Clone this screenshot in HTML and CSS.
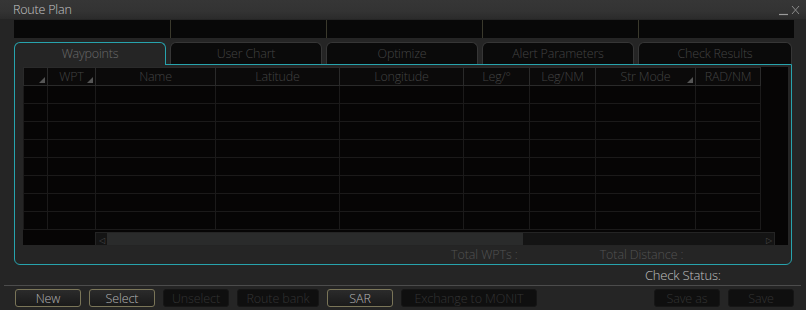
FILE: index.html
```html
<!DOCTYPE html>
<html lang="en">
<head>
    <meta charset="UTF-8">
    <title>Route Plan</title>
    <link rel="stylesheet" href="styles.css">
</head>
<body>
<div class="window">
    <div class="titlebar">
        <span class="title">Route Plan</span>
        <span class="ctrls">
            <svg width="24" height="12" viewBox="0 0 24 12">
                <line x1="1" y1="10.5" x2="10" y2="10.5" stroke="#9a9a9a" stroke-width="1.2"/>
                <line x1="14" y1="2" x2="21" y2="10" stroke="#8a8a8a" stroke-width="1"/>
                <line x1="21" y1="2" x2="14" y2="10" stroke="#8a8a8a" stroke-width="1"/>
            </svg>
        </span>
    </div>

    <div class="strip">
        <div></div><div></div><div></div><div></div><div></div>
    </div>

    <div class="tabs">
        <div class="tab active">Waypoints</div>
        <div class="tab">User Chart</div>
        <div class="tab">Optimize</div>
        <div class="tab">Alert Parameters</div>
        <div class="tab last">Check Results</div>
    </div>

    <div class="panel">
        <div class="grid">
            <table class="wp">
                <colgroup>
                    <col style="width:24px"><col style="width:48px"><col style="width:120px">
                    <col style="width:124px"><col style="width:124px"><col style="width:66px">
                    <col style="width:66px"><col style="width:100px"><col style="width:65px">
                </colgroup>
                <tr>
                    <th class="sort"></th>
                    <th class="sort">WPT</th>
                    <th>Name</th>
                    <th>Latitude</th>
                    <th>Longitude</th>
                    <th>Leg/°</th>
                    <th>Leg/NM</th>
                    <th class="sort">Str Mode</th>
                    <th>RAD/NM</th>
                </tr>
                <tr><td></td><td></td><td></td><td></td><td></td><td></td><td></td><td></td><td></td></tr>
                <tr><td></td><td></td><td></td><td></td><td></td><td></td><td></td><td></td><td></td></tr>
                <tr><td></td><td></td><td></td><td></td><td></td><td></td><td></td><td></td><td></td></tr>
                <tr><td></td><td></td><td></td><td></td><td></td><td></td><td></td><td></td><td></td></tr>
                <tr><td></td><td></td><td></td><td></td><td></td><td></td><td></td><td></td><td></td></tr>
                <tr><td></td><td></td><td></td><td></td><td></td><td></td><td></td><td></td><td></td></tr>
                <tr><td></td><td></td><td></td><td></td><td></td><td></td><td></td><td></td><td></td></tr>
                <tr><td></td><td></td><td></td><td></td><td></td><td></td><td></td><td></td><td></td></tr>
            </table>
            <div class="hscroll">
                <div class="frozen"></div>
                <div class="track">
                    <span class="arrow left">◁</span>
                    <span class="thumb"></span>
                    <span class="arrow right">▷</span>
                </div>
            </div>
        </div>
        <div class="totals">
            <span class="total-wpts">Total WPTs :</span>
            <span class="total-dist">Total Distance :</span>
        </div>
    </div>

    <div class="status">Check Status:</div>

    <div class="buttons">
        <button class="btn">New</button>
        <button class="btn">Select</button>
        <button class="btn off">Unselect</button>
        <button class="btn off wide">Route bank</button>
        <button class="btn">SAR</button>
        <button class="btn off xwide">Exchange to MONIT</button>
        <span class="spacer"></span>
        <button class="btn off">Save as</button>
        <button class="btn off">Save</button>
    </div>
</div>
</body>
</html>
```

FILE: styles.css
```css
body {
    margin: 0;
    background: #232323;
    font-family: "Open Sans", "Noto Sans", sans-serif;
    font-size: 12px;
    font-weight: 300;
}

.window {
    width: 806px;
    height: 310px;
    overflow: hidden;
    background: #252525;
    display: flex;
    flex-direction: column;
}

.titlebar {
    height: 19px;
    background: linear-gradient(#363636, #333333 60%, #2b2b2b);
    display: flex;
    align-items: center;
    justify-content: space-between;
    padding: 0 4px 0 13px;
}

.title {
    color: #c4c4c4;
    font-size: 12.5px;
    letter-spacing: -0.2px;
}

.ctrls svg {
    display: block;
}

.strip {
    margin: 1px 0 0 14px;
    width: 780px;
    height: 18px;
    background: #080808;
    display: grid;
    grid-template-columns: repeat(5, 1fr);
}

.strip div + div {
    border-left: 1px solid #3a392c;
}

.tabs {
    margin: 4px 0 0 14px;
    width: 778px;
    height: 22px;
    display: flex;
    gap: 4px;
}

.tab {
    width: 150px;
    background: #0a0a0a;
    border: 1px solid #363636;
    border-bottom: none;
    border-radius: 6px 6px 0 0;
    color: #434343;
    text-align: center;
    line-height: 22px;
    font-size: 12.5px;
    letter-spacing: -0.2px;
}

.tab.last {
    flex: 1;
}

.tab.active {
    background: #252525;
    border-color: #27a3ad;
    color: #6a6a6a;
    height: 22px;
    position: relative;
    z-index: 1;
}

.panel {
    margin-left: 14px;
    width: 776px;
    height: 199px;
    border: 1px solid #27a3ad;
    border-radius: 0 0 6px 6px;
    padding: 0;
}

.grid {
    margin: 2px 0 0 8px;
    width: 765px;
    height: 178px;
    background: #060505;
}

.wp {
    table-layout: fixed;
    border-collapse: collapse;
    width: 737px;
}

.wp tr {
    height: 18px;
}

.wp th {
    background: #0b0a0a;
    border: 1px solid #2a2a2a;
    color: #424242;
    font-weight: 300;
    font-size: 12.5px;
    padding: 0;
    height: 17px;
    letter-spacing: -0.2px;
    position: relative;
}

.wp th.sort::after {
    content: "";
    position: absolute;
    right: 2px;
    bottom: 2px;
    border-style: solid;
    border-width: 0 0 6px 6px;
    border-color: transparent transparent #555 transparent;
}

.wp td {
    border: 1px solid #1b1a1a;
    padding: 0;
}

.hscroll {
    margin-top: 2px;
    height: 14px;
    display: flex;
}

.frozen {
    width: 72px;
}

.track {
    width: 678px;
    background: #141414;
    border: 1px solid #242424;
    display: flex;
    align-items: center;
}

.arrow {
    color: #4a4a4a;
    font-size: 8px;
    width: 11px;
    text-align: center;
}

.arrow.right {
    margin-left: auto;
}

.thumb {
    width: 416px;
    height: 12px;
    background: #2a2b2b;
}

.totals {
    height: 19px;
    display: flex;
    align-items: center;
    color: #525252;
    font-size: 12.5px;
    letter-spacing: -0.1px;
}

.total-wpts {
    margin-left: 436px;
}

.total-dist {
    margin-left: 82px;
}

.status {
    height: 20px;
    line-height: 21px;
    color: #c0c0c0;
    font-size: 13px;
    letter-spacing: -0.2px;
    border-bottom: 1px solid #4c4c4c;
    margin: 0 5px 0 4px;
    padding-left: 641px;
}

.buttons {
    margin-top: 3px;
    padding-left: 15px;
    display: flex;
    gap: 8px;
    height: 18px;
}

.btn {
    width: 66px;
    height: 18px;
    padding: 0;
    font-family: inherit;
    font-size: 12.5px;
    font-weight: 300;
    letter-spacing: -0.1px;
    color: #b4b4b4;
    background: linear-gradient(#2b2b2b, #1a1a1a);
    border: 1px solid #7a7558;
    border-radius: 3px;
}

.btn.off {
    color: #333333;
    background: #0f0f0f;
    border-color: #161616;
}

.btn.wide {
    width: 82px;
}

.btn.xwide {
    width: 136px;
}

.spacer {
    flex: 1;
}

.buttons .btn:last-child {
    margin-right: 12px;
}
```
